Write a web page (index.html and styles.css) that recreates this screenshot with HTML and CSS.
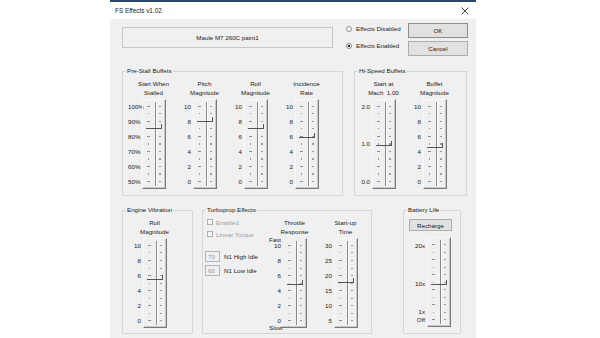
FILE: index.html
```html
<!DOCTYPE html>
<html>
<head>
<meta charset="utf-8">
<title>FS Effects v1.02</title>
<link rel="stylesheet" href="styles.css">
</head>
<body>
<div class="strip"></div>
<div class="dialog">
  <div class="titlebar">
    <span class="title">FS Effects v1.02</span>
    <svg class="close" width="8" height="8" viewBox="0 0 8 8"><path d="M0.5 0.5L7.5 7.5M7.5 0.5L0.5 7.5" stroke="#333" stroke-width="0.9" fill="none"/></svg>
  </div>
  <div class="body">
    <div class="row1">
      <div class="namebox">Maule M7 260C paint1</div>
      <div class="radios">
        <div class="radio"><span class="rb"></span>Effects Disabled</div>
        <div class="radio"><span class="rb on"></span>Effects Enabled</div>
      </div>
      <div class="buttons">
        <div class="btn default">OK</div>
        <div class="btn">Cancel</div>
      </div>
    </div>

    <div class="row2">
      <fieldset class="grp prestall">
        <legend>Pre-Stall Buffets</legend>
        <div class="cols">
          <div class="col">
            <div class="hdr">Start When<br>Stalled</div>
            <div class="scale"><span>100%</span><span>90%</span><span>80%</span><span>70%</span><span>60%</span><span>50%</span></div>
            <div class="slider"><i class="tl"></i><i class="ch"></i><i class="tr"></i><b class="thumb" style="top:24px"></b></div>
          </div>
          <div class="col">
            <div class="hdr">Pitch<br>Magnitude</div>
            <div class="scale"><span>10</span><span>8</span><span>6</span><span>4</span><span>2</span><span>0</span></div>
            <div class="slider"><i class="tl"></i><i class="ch"></i><i class="tr"></i><b class="thumb" style="top:17px"></b></div>
          </div>
          <div class="col">
            <div class="hdr">Roll<br>Magnitude</div>
            <div class="scale"><span>10</span><span>8</span><span>6</span><span>4</span><span>2</span><span>0</span></div>
            <div class="slider"><i class="tl"></i><i class="ch"></i><i class="tr"></i><b class="thumb" style="top:24px"></b></div>
          </div>
          <div class="col">
            <div class="hdr">Incidence<br>Rate</div>
            <div class="scale"><span>10</span><span>8</span><span>6</span><span>4</span><span>2</span><span>0</span></div>
            <div class="slider"><i class="tl"></i><i class="ch"></i><i class="tr"></i><b class="thumb" style="top:33px"></b></div>
          </div>
        </div>
      </fieldset>

      <fieldset class="grp hispeed">
        <legend>Hi-Speed Buffets</legend>
        <div class="cols">
          <div class="col">
            <div class="hdr">Start at<br>Mach&nbsp; 1.00</div>
            <div class="scale"><span>2.0</span><span>1.0</span><span>0.0</span></div>
            <div class="slider"><i class="tl"></i><i class="ch"></i><i class="tr"></i><b class="thumb" style="top:41px"></b></div>
          </div>
          <div class="col">
            <div class="hdr">Buffet<br>Magnitude</div>
            <div class="scale"><span>10</span><span>8</span><span>6</span><span>4</span><span>2</span><span>0</span></div>
            <div class="slider"><i class="tl"></i><i class="ch"></i><i class="tr"></i><b class="thumb" style="top:43px"></b></div>
          </div>
        </div>
      </fieldset>
    </div>

    <div class="row3">
      <fieldset class="grp engine">
        <legend>Engine Vibration</legend>
        <div class="cols">
          <div class="col">
            <div class="hdr">Roll<br>Magnitude</div>
            <div class="scale"><span>10</span><span>8</span><span>6</span><span>4</span><span>2</span><span>0</span></div>
            <div class="slider"><i class="tl"></i><i class="ch"></i><i class="tr"></i><b class="thumb" style="top:36px"></b></div>
          </div>
        </div>
      </fieldset>

      <fieldset class="grp turbo">
        <legend>Turboprop Effects</legend>
        <div class="cols">
          <div class="tleft">
            <div class="chk"><span class="cb"></span>Enabled</div>
            <div class="chk"><span class="cb"></span>Linear Torque</div>
            <div class="n1 first"><span class="tb">70</span>N1 High Idle</div>
            <div class="n1"><span class="tb">60</span>N1 Low Idle</div>
          </div>
          <div class="col">
            <div class="hdr">Throttle<br>Response</div>
            <div class="scale-wrap">
              <span class="fast">Fast</span>
              <div class="scale"><span>10</span><span>8</span><span>6</span><span>4</span><span>2</span><span>0</span></div>
              <span class="slow">Slow</span>
            </div>
            <div class="slider wide"><i class="tl"></i><i class="ch"></i><i class="tr"></i><b class="thumb" style="top:41px"></b></div>
          </div>
          <div class="col">
            <div class="hdr">Start-up<br>Time</div>
            <div class="scale"><span>30</span><span>25</span><span>20</span><span>15</span><span>10</span><span>5</span></div>
            <div class="slider"><i class="tl"></i><i class="ch"></i><i class="tr"></i><b class="thumb" style="top:39px"></b></div>
          </div>
        </div>
      </fieldset>

      <fieldset class="grp battery">
        <legend>Battery Life</legend>
        <div class="btn recharge">Recharge</div>
        <div class="cols">
          <div class="col col-bat">
            <div class="scale-bat"><span class="b20">20x</span><span class="b10">10x</span><span class="b1">1x</span><span class="boff">Off</span></div>
            <div class="slider"><i class="tl"></i><i class="ch"></i><i class="tr"></i><b class="thumb" style="top:42px"></b></div>
          </div>
        </div>
      </fieldset>
    </div>
  </div>
</div>
</body>
</html>
```

FILE: styles.css
```css
* { box-sizing: border-box; }
html, body { margin: 0; padding: 0; }
body {
  width: 600px;
  height: 338px;
  overflow: hidden;
  background: #ffffff;
  font-family: "Liberation Sans", Arial, sans-serif;
  font-size: 6.2px;
  color: #1a1a1a;
}

.strip {
  margin-left: 110px;
  width: 366px;
  height: 2px;
  background: #2c4868;
}

.dialog {
  margin-left: 110px;
  width: 366px;
}

.titlebar {
  height: 17px;
  background: #ffffff;
  display: flex;
  align-items: center;
  justify-content: space-between;
  padding: 0 7px 0 5px;
  font-size: 6.4px;
}

.body {
  height: 319px;
  background: #f0f0f0;
  padding: 0 8px 0 12px;
  overflow: hidden;
}

/* top row */
.row1 {
  height: 48px;
  display: flex;
  align-items: flex-start;
}
.namebox {
  margin-top: 8px;
  width: 211px;
  height: 21px;
  border: 1px solid #c6c6c6;
  display: flex;
  align-items: center;
  justify-content: center;
}
.radios {
  margin-left: 13px;
  margin-top: 6px;
  display: flex;
  flex-direction: column;
  gap: 9px;
}
.radio {
  display: flex;
  align-items: center;
  height: 8px;
  line-height: 8px;
}
.rb {
  width: 6px;
  height: 6px;
  border-radius: 50%;
  border: 1px solid #8c8c8c;
  background: #ffffff;
  margin-right: 4px;
}
.rb.on {
  background: radial-gradient(circle, #222 0 1.1px, #ffffff 1.6px);
}
.buttons {
  margin-left: auto;
  margin-top: 4px;
  display: flex;
  flex-direction: column;
  gap: 3px;
}
.btn {
  width: 60px;
  height: 15px;
  background: #e1e1e1;
  border: 1px solid #adadad;
  display: flex;
  align-items: center;
  justify-content: center;
}
.btn.default { border-color: #8c8c8c; }

/* group boxes */
.row2, .row3 { display: flex; }
.row3 { margin-top: 10px; }

.grp {
  margin: 0;
  padding: 3.5px 0 0 0;
  border: 1px solid #d6d6d6;
  min-width: 0;
  flex: none;
}
.grp legend {
  margin-left: 3px;
  padding: 0 1px;
  line-height: 8px;
}
.prestall { width: 221px; height: 129px; }
.hispeed { margin-left: 11px; width: 113px; height: 129px; }
.engine { width: 71px; height: 128px; }
.turbo { margin-left: 9px; width: 170px; height: 128px; }
.battery { margin-left: 31px; width: 58px; height: 128px; }

.cols { display: flex; }
.prestall .cols { padding-left: 5px; }
.hispeed .cols { padding-left: 3px; }
.engine .cols { padding-left: 6px; }
.battery .cols { padding-left: 9px; }

.col {
  display: grid;
  grid-template-columns: 14px 24px 13px;
  row-gap: 2px;
  align-items: start;
}
.hdr {
  grid-column: 1 / -1;
  text-align: center;
  line-height: 9px;
  height: 18px;
  white-space: nowrap;
}
.scale, .scale-wrap, .scale-bat { grid-column: 1; }
.scale {
  display: flex;
  flex-direction: column;
  justify-content: space-between;
  height: 90px;
  text-align: right;
  padding-right: 2px;
  line-height: 15px;
  white-space: nowrap;
}
.scale-wrap { display: flex; flex-direction: column; }
.fast, .slow {
  line-height: 8px;
  text-align: right;
  padding-right: 2px;
}
.fast { margin-top: -2px; margin-bottom: -6px; }
.slow { margin-top: -4px; margin-bottom: -4px; padding-right: 3px; }

/* slider (trackbar) */
.slider {
  grid-column: 2;
  height: 90px;
  position: relative;
  display: flex;
  align-items: flex-start;
  border-top: 1px solid #f8f8f8;
  border-left: 1px solid #f8f8f8;
  border-right: 1px solid #7a7a7a;
  border-bottom: 1px solid #7a7a7a;
  box-shadow: inset -1px -1px 0 #c8c8c8;
}
.slider.wide {
  margin-left: -3px;
  width: 27px;
  border-left-color: transparent;
  border-top-color: transparent;
}
.slider i { display: block; }
.tl {
  margin-left: 4px;
  margin-top: 6px;
  width: 3px;
  height: 76px;
  background:
    repeating-linear-gradient(to bottom, #8c8c8c 0 1px, transparent 1px 15px) 0 0 / 3px 100% no-repeat,
    repeating-linear-gradient(to bottom, #9a9a9a 0 1px, transparent 1px 7.5px) 1px 0 / 1px 100% no-repeat;
}
.slider.wide .tl { margin-left: 7px; }
.ch {
  margin-left: 5px;
  margin-top: 2px;
  width: 2px;
  height: 84px;
  background: linear-gradient(to right, #8a8a8a 0 1px, #ffffff 1px);
}
.tr {
  margin-left: 2px;
  margin-top: 6px;
  width: 2px;
  height: 76px;
  background: repeating-linear-gradient(to bottom, #9a9a9a 0 1px, transparent 1px 7.5px);
}
.thumb {
  position: absolute;
  left: 3px;
  width: 16px;
  height: 5px;
  border-right: 1px solid #555555;
  border-bottom: 1px solid #555555;
}
.slider.wide .thumb { left: 6px; }

/* turboprop left part */
.tleft {
  width: 67px;
  padding-left: 2px;
}
.chk {
  display: flex;
  align-items: center;
  height: 9px;
  margin-left: 2px;
  color: #a0a0a0;
}
.chk + .chk { margin-top: 3px; }
.cb {
  width: 6px;
  height: 6px;
  border: 1px solid #b0b0b0;
  background: #f6f6f6;
  margin-right: 3px;
}
.n1 {
  display: flex;
  align-items: center;
  height: 11px;
  margin-top: 3px;
}
.n1.first { margin-top: 12.5px; }
.tb {
  width: 15px;
  height: 11px;
  border: 1px solid #b4b4b4;
  color: #9a9a9a;
  padding-left: 2px;
  line-height: 9px;
  margin-right: 4px;
}

/* battery */
.recharge {
  margin-left: 5px;
  margin-top: 1.5px;
  width: 43px;
  height: 12px;
}
.col-bat { margin-top: 6px; }
.scale-bat {
  display: flex;
  flex-direction: column;
  text-align: right;
  padding-right: 2px;
  line-height: 8px;
}
.b20 { margin-top: 5px; }
.b10 { margin-top: 30px; }
.b1 { margin-top: 20px; }
```
